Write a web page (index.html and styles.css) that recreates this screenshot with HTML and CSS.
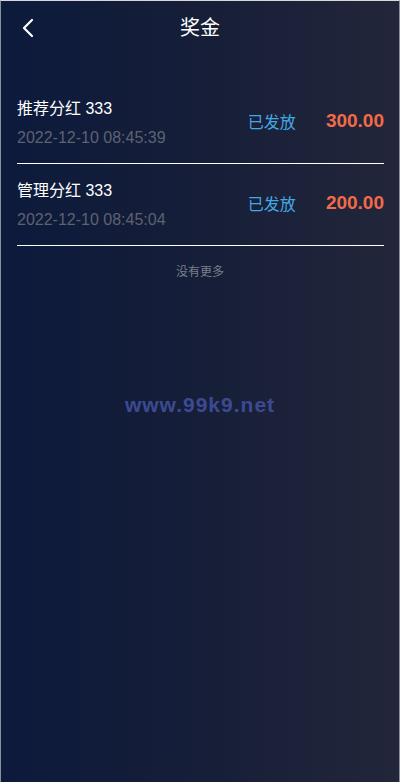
FILE: index.html
```html
<!DOCTYPE html>
<html lang="zh-CN">
<head>
<meta charset="utf-8">
<title>奖金</title>
<link rel="stylesheet" href="styles.css">
</head>
<body>
<div class="page">
  <header class="header">
    <span class="back">
      <svg width="14" height="20" viewBox="0 0 14 20"><path d="M11 2 L3 10 L11 18" fill="none" stroke="#fff" stroke-width="2.2" stroke-linecap="round" stroke-linejoin="round"/></svg>
    </span>
    <h1 class="title">奖金</h1>
  </header>
  <ul class="list">
    <li class="row">
      <div class="info">
        <div class="name">推荐分红 333</div>
        <div class="date">2022-12-10 08:45:39</div>
      </div>
      <div class="status">已发放</div>
      <div class="amount">300.00</div>
    </li>
    <li class="row">
      <div class="info">
        <div class="name">管理分红 333</div>
        <div class="date">2022-12-10 08:45:04</div>
      </div>
      <div class="status">已发放</div>
      <div class="amount">200.00</div>
    </li>
  </ul>
  <div class="nomore">没有更多</div>
  <div class="watermark">www.99k9.net</div>
</div>
</body>
</html>
```
FILE: styles.css
```css
html, body {
  margin: 0;
  padding: 0;
}
body {
  font-family: "Liberation Sans", "Noto Sans CJK SC", sans-serif;
  background: #10193a;
}
.page {
  position: relative;
  box-sizing: border-box;
  width: 400px;
  height: 782px;
  border-top: 1px solid #d8d8d8;
  border-left: 1px solid #8a8f9a;
  border-right: 1px solid #8a8f9a;
  background: linear-gradient(90deg, #0c1a3c 0%, #161e38 50%, #22263a 100%);
  color: #fff;
}
.header {
  position: relative;
  height: 54px;
  display: flex;
  align-items: center;
  justify-content: center;
}
.back {
  position: absolute;
  left: 20px;
  top: 17px;
  display: flex;
}
.title {
  margin: 0;
  font-size: 20px;
  font-weight: normal;
  line-height: 54px;
}
.list {
  list-style: none;
  margin: 26px 0 0;
  padding: 0 15px 0 16px;
}
.row {
  display: flex;
  align-items: center;
  padding: 17px 0 14px;
  border-bottom: 1px solid #ffffff;
}
.row + .row {
  padding-top: 16px;
}
.info {
  flex: 1;
}
.name {
  font-size: 16px;
  line-height: 22px;
}
.date {
  margin-top: 7px;
  font-size: 16px;
  line-height: 22px;
  color: #5e6271;
}
.status {
  font-size: 16px;
  color: #43a8e4;
  margin-right: 30px;
  margin-bottom: 6px;
}
.amount {
  font-size: 19px;
  font-weight: bold;
  color: #f26a48;
  margin-bottom: 6px;
}
.nomore {
  text-align: center;
  font-size: 12px;
  color: #7a7f8c;
  margin-top: 16px;
}
.watermark {
  position: absolute;
  left: 0;
  right: 0;
  top: 392px;
  text-align: center;
  font-size: 21px;
  font-weight: bold;
  letter-spacing: 1px;
  color: #3d4a92;
}
```
